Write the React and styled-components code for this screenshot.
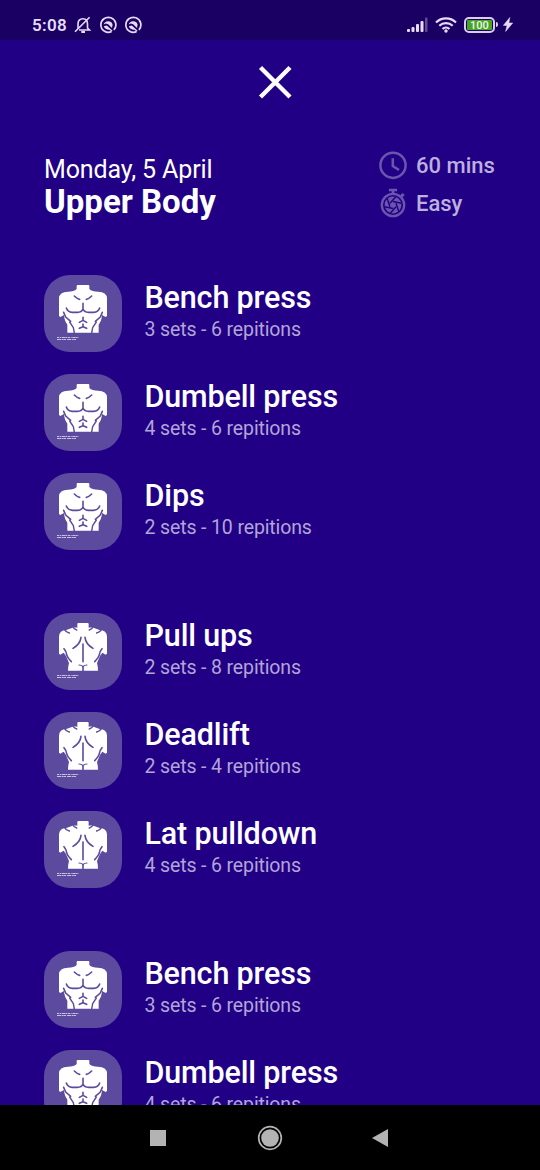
import React from 'react';
import styled, { createGlobalStyle } from 'styled-components';

const GlobalStyle = createGlobalStyle`
    * {
        box-sizing: border-box;
    }

    body {
        background: #210085;
        font-family: Roboto, sans-serif;
        margin: 0;
        overflow: hidden;
    }
`;

const Screen = styled.div`
    background: #210085;
    color: white;
    display: flex;
    flex-direction: column;
    height: 1170px;
    overflow: hidden;
    width: 540px;
`;

const StatusBar = styled.div`
    align-items: center;
    background: #1a0062;
    color: #e6dcf8;
    display: flex;
    flex: 0 0 40px;
    justify-content: space-between;
    padding: 9px 27px 0 32px;
`;

const StatusGroup = styled.div`
    align-items: center;
    display: flex;
    gap: ${props => props.$gap}px;

    svg {
        display: block;
    }
`;

const Time = styled.span`
    font-size: 17px;
    font-weight: 600;
    letter-spacing: 0.3px;
    line-height: 20px;
`;

const CloseButton = styled.button`
    background: transparent;
    border: none;
    display: block;
    height: 34px;
    margin: 25px 0 0 258px;
    padding: 0;
    width: 34px;
`;

const Header = styled.div`
    display: flex;
    justify-content: space-between;
    margin-top: 51px;
    padding: 0 44px 0 44px;
`;

const DateLabel = styled.div`
    font-size: 25px;
    letter-spacing: -0.12px;
    line-height: 30px;
    margin-top: 5px;
`;

const WorkoutName = styled.div`
    font-size: 33px;
    font-weight: 700;
    line-height: 36px;
    margin-top: -1px;
`;

const Facts = styled.div`
    color: #bcb0dd;
    display: flex;
    flex-direction: column;
    gap: 8px;
    width: 117px;
`;

const Fact = styled.div`
    align-items: center;
    display: flex;
    font-size: 22px;
    font-weight: 500;
    gap: 8px;
    height: 30px;
    white-space: nowrap;

    svg {
        flex: none;
    }
`;

const ExerciseList = styled.div`
    display: flex;
    flex: 1;
    flex-direction: column;
    gap: 63.2px;
    margin-top: 55px;
    min-height: 0;
    overflow: hidden;
    padding-left: 44px;
`;

const ExerciseGroup = styled.div`
    display: flex;
    flex: none;
    flex-direction: column;
    gap: 22px;
`;

const ExerciseRow = styled.div`
    display: flex;
    gap: 22.5px;
    height: 77px;
`;

const Tile = styled.div`
    background: #5c4a9e;
    border-radius: 26px;
    flex: none;
    height: 77px;
    width: 78px;

    svg {
        display: block;
    }
`;

const ExerciseName = styled.div`
    font-size: 30.5px;
    font-weight: 500;
    letter-spacing: -0.15px;
    line-height: 36px;
    margin-top: 5px;
`;

const ExerciseSets = styled.div`
    color: #b2a5d8;
    font-size: 19.5px;
    letter-spacing: -0.13px;
    line-height: 24px;
    margin-top: 2px;
`;

const NavBar = styled.div`
    align-items: center;
    background: black;
    display: flex;
    flex: 0 0 65px;
    justify-content: space-between;
    padding: 0 151px 0 149px;

    svg:nth-child(2) {
        margin-left: 2px;
    }
`;

const MutedBell = () => (
    <svg width="18" height="18" viewBox="0 0 18 18" fill="none" stroke="currentColor" strokeWidth="1.6">
        <path d="M4 12.5V8C4 4.5 6 2.7 9 2.7C11.6 2.7 13.5 4.5 13.5 8V12L15.5 14H5" />
        <path d="M1 15.8L15.6 1.2" />
        <path d="M7.3 16H11" strokeWidth="2" />
    </svg>
);

const AppBadge = () => (
    <svg width="18" height="18" viewBox="0 0 18 18" fill="none">
        <path d="M14.9 13.9A7.5 7.5 0 1 0 12.6 15.6" stroke="currentColor" strokeWidth="1.7" />
        <path d="M4.6 8.6A4.7 4.7 0 0 1 13.6 8.4L13 12L9.2 8.3L6.8 7.6Z" fill="currentColor" />
        <path d="M4.8 10.3L7.8 9.4L13.6 14.8L12.6 15.6L10.4 13.7C7.6 13.8 5.5 12.6 4.8 10.3Z" fill="currentColor" />
    </svg>
);

const Signal = () => (
    <svg width="21" height="15" viewBox="0 0 21 15" fill="currentColor">
        <rect x="0" y="12" width="3" height="3" rx="1" />
        <rect x="4.5" y="10" width="3" height="5" rx="1" />
        <rect x="9" y="7" width="3" height="8" rx="1" />
        <rect x="13.5" y="4" width="3" height="11" rx="1" />
        <rect x="18" y="0.5" width="2.5" height="14.5" rx="1" opacity="0.35" />
    </svg>
);

const Wifi = () => (
    <svg width="22" height="16" viewBox="0 0 22 16" fill="none" stroke="currentColor" strokeWidth="2.2">
        <path d="M1 5.5C6.5 0 15.5 0 21 5.5" />
        <path d="M4.3 8.8C8 5.2 14 5.2 17.7 8.8" />
        <path d="M7.5 12C9.5 10.1 12.5 10.1 14.5 12" />
        <circle cx="11" cy="14" r="1.7" fill="currentColor" stroke="none" />
    </svg>
);

const Battery = styled(StatusGroup)`
    margin-right: -2px;
`;

const BatteryCase = styled.div`
    align-items: center;
    border: 2px solid #d9cdf0;
    border-radius: 5px;
    display: flex;
    height: 16px;
    padding: 1px;
    width: 31px;
`;

const BatteryCharge = styled.div`
    background: #46a526;
    border-radius: 1px;
    color: #f0f5ec;
    font-size: 11px;
    font-weight: 500;
    height: 10px;
    line-height: 11px;
    text-align: center;
    width: 100%;
`;

const BatteryTip = styled.div`
    background: #d9cdf0;
    border-radius: 0 2px 2px 0;
    height: 5px;
    margin-left: 1px;
    width: 2px;
`;

const Bolt = () => (
    <svg width="10" height="15" viewBox="0 0 10 15" fill="currentColor">
        <path d="M6.8 0.5L0.3 8.4H4L2.6 14.5L9.7 6H5.9Z" stroke="currentColor" strokeWidth="0.5" />
    </svg>
);

const ClockIcon = () => (
    <svg width="29" height="29" viewBox="0 0 29 29" fill="none" stroke="#6a56ad" strokeWidth="2.5">
        <circle cx="14" cy="14.3" r="12.6" />
        <path d="M13.8 7.3V15L20 19" />
    </svg>
);

const StopwatchIcon = () => (
    <svg width="29" height="30" viewBox="0 0 29 30" fill="none" stroke="#6a56ad">
        <circle cx="14" cy="17" r="11.2" strokeWidth="2.3" />
        <path d="M9.9 2H18.1M14 3V6" strokeWidth="2.6" />
        <path d="M22.3 8.4L24.7 6" strokeWidth="3" />
        <circle cx="14" cy="17" r="8.4" fill="#6a56ad" stroke="none" />
        {[0, 60, 120, 180, 240, 300].map(angle => (
            <path
                key={angle}
                d="M10.9 15.3L16.8 8.7"
                stroke="#210085"
                strokeWidth="1.4"
                transform={`rotate(${angle} 14 17)`}
            />
        ))}
    </svg>
);

// Small print in the corner of each muscle tile
const FinePrint = () => (
    <g stroke="#f0ebfa" strokeWidth="3" opacity="0.75">
        <path d="M9 169.5H74" strokeDasharray="7 2 3 2 10 1 5 2" />
        <path d="M9 175.5H67" strokeDasharray="12 2 4 1 8 3" />
    </g>
);

const Chest = () => (
    <svg width="78" height="77" viewBox="-30 -18 234 231">
        <path
            fill="white"
            d="M68 15Q68 12 71 12H103Q106 12 106 15V24Q114 32 132 32Q158 32 159 52V105L155 108L144 102L143 110Q142 120 134 131V155H40V131Q32 120 31 110L30 102L19 108L15 105V52Q16 32 42 32Q60 32 68 24Z"
        />
        <g fill="none" stroke="#5c4a9e" strokeWidth="4.8" strokeLinecap="round" strokeLinejoin="round">
            <path d="M61 45Q70 54 77 55M113 45Q104 54 97 55" />
            <path d="M87 67V84Q83 94 70 94H55Q41 93 37 81M87 84Q91 94 104 94H119Q133 93 137 81" />
            <path d="M29 94L35 108L50 121M145 94L139 108L124 121" />
            <path d="M87 109V118L76 124M87 118L98 124" />
            <path d="M87 129V137L76 142M87 137L98 142" />
            <path d="M47 123L58 140L61 156M127 123L116 140L113 156" strokeWidth="4.2" />
        </g>
        <FinePrint />
    </svg>
);

const Back = () => (
    <svg width="78" height="77" viewBox="-30 -18 234 231">
        <path
            fill="white"
            d="M70 15Q70 12 73 12H101Q104 12 104 15V26L114 25L137 33Q158 34 159 52V104L155 107L145 101L138 111L129 132Q132 143 132 155H42Q42 143 45 132L36 111L29 101L19 107L15 104V52Q16 34 37 33L60 25L70 26Z"
        />
        <g fill="none" stroke="#5c4a9e" strokeWidth="4.8" strokeLinecap="round">
            <path d="M81 55Q79 75 57 88M93 55Q95 75 117 88" />
            <path d="M87 75V128M87 143V157" />
            <path d="M30 89Q38 98 38 107Q40 116 52 128M144 89Q136 98 136 107Q134 116 122 128" />
            <path d="M75 138Q83 138 87 143Q91 138 99 138" strokeWidth="3.5" />
            <path d="M32 32Q36 40 46 42M142 32Q138 40 128 42M57 23Q60 31 68 33M117 23Q114 31 106 33" strokeWidth="4.5" />
        </g>
        <FinePrint />
    </svg>
);

const chestExercises = [
    { name: 'Bench press', sets: 3, reps: 6 },
    { name: 'Dumbell press', sets: 4, reps: 6 },
    { name: 'Dips', sets: 2, reps: 10 }
];

const backExercises = [
    { name: 'Pull ups', sets: 2, reps: 8 },
    { name: 'Deadlift', sets: 2, reps: 4 },
    { name: 'Lat pulldown', sets: 4, reps: 6 }
];

const groups = [
    { Icon: Chest, exercises: chestExercises },
    { Icon: Back, exercises: backExercises },
    { Icon: Chest, exercises: chestExercises.slice(0, 2) }
];

const Exercise = ({ Icon, name, sets, reps }) => (
    <ExerciseRow>
        <Tile><Icon /></Tile>
        <div>
            <ExerciseName>{name}</ExerciseName>
            <ExerciseSets>{`${sets} sets - ${reps} repitions`}</ExerciseSets>
        </div>
    </ExerciseRow>
);

const App = () => (
    <Screen>
        <GlobalStyle />
        <StatusBar>
            <StatusGroup $gap={7}>
                <Time>5:08</Time>
                <MutedBell />
                <AppBadge />
                <AppBadge />
            </StatusGroup>
            <StatusGroup $gap={7}>
                <Signal />
                <Wifi />
                <Battery $gap={0}>
                    <BatteryCase><BatteryCharge>100</BatteryCharge></BatteryCase>
                    <BatteryTip />
                </Battery>
                <Bolt />
            </StatusGroup>
        </StatusBar>
        <CloseButton aria-label="Close">
            <svg width="34" height="34" viewBox="0 0 34 34" stroke="white" strokeWidth="4.4">
                <path d="M2.5 2.5L32 32M32 2.5L2.5 32" />
            </svg>
        </CloseButton>
        <Header>
            <div>
                <DateLabel>Monday, 5 April</DateLabel>
                <WorkoutName>Upper Body</WorkoutName>
            </div>
            <Facts>
                <Fact><ClockIcon />60 mins</Fact>
                <Fact><StopwatchIcon />Easy</Fact>
            </Facts>
        </Header>
        <ExerciseList>
            {groups.map(({ Icon, exercises }, index) => (
                <ExerciseGroup key={index}>
                    {exercises.map(exercise => <Exercise key={exercise.name} Icon={Icon} {...exercise} />)}
                </ExerciseGroup>
            ))}
        </ExerciseList>
        <NavBar>
            <svg width="18" height="18"><rect x="1" y="1" width="16" height="16" fill="#b3b3b3" /></svg>
            <svg width="26" height="26" viewBox="0 0 26 26">
                <circle cx="13" cy="13" r="11.3" fill="none" stroke="#b3b3b3" strokeWidth="1.7" />
                <circle cx="13" cy="13" r="8.8" fill="#b3b3b3" />
            </svg>
            <svg width="18" height="20"><path d="M1 10L17 1V19Z" fill="#b3b3b3" /></svg>
        </NavBar>
    </Screen>
);

export default App;
